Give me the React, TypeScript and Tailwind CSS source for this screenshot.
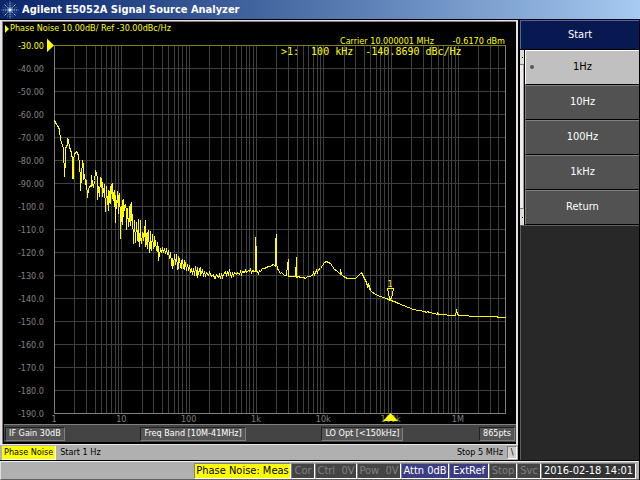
import React from 'react';
import clsx from 'clsx';

// Screen geometry of the graticule
const X0 = 54;
const X1 = 505;
const Y0 = 45;
const DIV = 23;
const DECADE = (X1 - X0) / Math.log10(5e6);

const yLabels = [
  '-30.00', '-40.00', '-50.00', '-60.00', '-70.00', '-80.00', '-90.00', '-100.0', '-110.0',
  '-120.0', '-130.0', '-140.0', '-150.0', '-160.0', '-170.0', '-180.0', '-190.0',
];
const xLabels = ['1', '10', '100', '1k', '10k', '100k', '1M'];

const minorLines: number[] = [];
for (let d = 0; d < 7; d++) {
  for (let m = 1; m < 10; m++) {
    const f = m * 10 ** d;
    if (f > 1 && f < 5e6) minorLines.push(Math.round(X0 + DECADE * Math.log10(f)));
  }
}

const trace = `
54,120 55,122 56,124 57,125 58,127 59,129 60,139 61,142 62,145 63,148 64,176 65,160 65,149 66,145 67,145 67,138
68,140 69,146 70,150 71,152 72,160 72,178 73,178 73,160 74,154 75,152 76,151 77,153 78,155 79,163 80,180 80,190
81,176 82,160 83,165 83,179 84,174 85,183 86,181 87,197 88,188 89,187 90,185 91,186 91,175 92,184 93,187 94,180
95,171 96,173 97,178 97,199 98,186 99,196 100,177 101,178 102,196 102,182 103,192 104,184 105,211 106,186
107,204 108,190 108,210 109,195 110,186 110,203 111,184 112,198 112,183 113,200 114,190 115,222 115,195 116,208
117,191 118,213 118,195 119,205 119,193 120,220 120,238 121,206 122,224 122,200 123,216 123,199 124,210 125,204
126,211 126,229 127,208 128,226 129,218 129,206 130,225 130,204 131,220 131,202 132,226 132,214 133,243 134,220
135,242 136,222 137,240 138,219 138,236 139,246 140,220 140,238 141,243 142,232 143,240 144,226 145,246 145,220
146,244 147,232 147,248 148,230 149,252 150,246 150,231 151,250 152,234 153,248 154,236 154,246 155,240 156,250
157,242 158,260 158,246 159,256 160,248 161,252 162,248 163,251 164,249 165,252 166,249 167,254 168,250 169,258
170,252 171,262 172,268 172,258 173,265 174,254 175,264 176,254 177,269 178,256 178,268 179,258 180,267 181,260
181,268 182,259 183,268 184,260 184,269 185,262 186,270 187,264 188,269 189,266 190,271 191,268 192,274 193,268
194,275 195,266 196,273 197,277 197,267 198,274 199,268 200,275 200,267 201,273 202,270 203,275 204,272 205,275
206,272 208,275 209,272 211,276 213,274 214,278 215,278 216,274 218,277 219,274 220,278 221,273 222,277 223,274
225,271 226,275 227,272 228,275 229,269 230,274 231,276 232,273 233,275 234,272 236,274 237,272 239,274 240,271
241,274 242,271 244,272 245,270 246,272 248,270 249,271 250,269 251,272 252,270 254,271 255,271 255,237 256,254
256,271 257,271 258,273 259,270 260,271 262,268 264,268 266,267 268,266 270,266 271,265 273,264 275,266 275,242
276,234 276,262 277,269 278,269 279,272 280,273 281,272 283,274 284,275 286,275 287,264 288,259 288,276 290,276
295,276 296,257 296,277 298,276 300,277 303,277 305,278 307,276 309,276 312,275 313,272 314,274 316,270 317,272
318,269 320,268 322,265 324,262 326,261 328,262 330,263 332,266 334,269 336,270 338,272 340,274 340,269 341,274
343,276 345,277 347,278 355,278 357,276 359,274 361,272 363,276 364,278 366,282 367,286 368,284 369,289 369,285
370,290 372,292 374,293 377,295 380,296 383,297 386,298 390,300 394,301 398,303 403,305 408,307 413,309 418,310
424,311 426,312 427,311 429,312 434,313 437,314 437,312 438,314 446,314 447,315 455,315 456,310 457,313 458,315
466,315 471,316 495,316 499,317 505,317`;

const softkeys = ['1Hz', '10Hz', '100Hz', '1kHz', 'Return'];

const indicators = [
  { label: 'Phase Noise: Meas', tone: 'meas', width: 'w-[97px]' },
  { label: 'Cor', tone: 'off', width: 'w-6' },
  { label: 'Ctrl  0V', tone: 'off', width: 'w-[42px]' },
  { label: 'Pow  0V', tone: 'off', width: 'w-[44px]' },
  { label: 'Attn 0dB', tone: 'on', width: 'w-12' },
  { label: 'ExtRef', tone: 'on', width: 'w-10' },
  { label: 'Stop', tone: 'off', width: 'w-7' },
  { label: 'Svc', tone: 'off', width: 'w-6' },
  { label: '2016-02-18 14:01', tone: 'clock', width: 'w-[95px]' },
];

const StarLogo = () => (
  <svg viewBox="0 0 18 18" className="h-[18px] w-[18px]" aria-hidden="true">
    <g stroke="#a9c8ec" strokeWidth="1" strokeDasharray="1.6 0.7">
      <path d="M9 5.5V0.5M9 12.5v5M5.5 9H0.5M12.5 9h5" />
      <path d="M6.6 6.6L3 3M11.4 11.4L15 15M11.4 6.6L15 3M6.6 11.4L3 15" />
      <path d="M7.3 4.8L6 1.5M10.7 13.2l1.3 3.3M10.7 4.8L12 1.5M7.3 13.2L6 16.5" strokeOpacity="0.35" />
      <path d="M4.8 7.3L1.5 6M13.2 10.7l3.3 1.3M4.8 10.7L1.5 12M13.2 7.3L16.5 6" strokeOpacity="0.35" />
    </g>
    <circle cx="9" cy="9" r="2.6" fill="none" stroke="#5f86c0" />
    <circle cx="9" cy="9" r="1.8" fill="#fff" />
  </svg>
);

const PlotChart = () => (
  <svg viewBox="3 35 513 389" className="block w-full" role="img" aria-label="Phase noise plot">
    <g shapeRendering="crispEdges" strokeWidth="1" fill="none">
      <g stroke="#404040">
        {minorLines.map((x) => (
          <line key={x} x1={x + 0.5} y1={Y0} x2={x + 0.5} y2={Y0 + DIV * 16} />
        ))}
        {yLabels.slice(1, -1).map((label, i) => (
          <line key={label} x1={X0} y1={Y0 + DIV * (i + 1) + 0.5} x2={X1} y2={Y0 + DIV * (i + 1) + 0.5} />
        ))}
      </g>
      <path d="M54.5 45V413.5H505.5V45" stroke="#808080" />
      <path d="M54 45.5H505" stroke="#808000" />
      <polyline points={trace} stroke="#ffff00" transform="translate(0.5 0.5)" />
      <path
        d="M387 288.5H394M387.5 289V291M393.5 289V291M388.5 291V296M392.5 291V296M389.5 296V299M391.5 296V299M390.5 298V300"
        stroke="#ffff00"
      />
    </g>
    <path d="M47 38.5L54 45.5L47 52Z" fill="#ffff00" />
    <g className="text-[9px]" fill="#808080">
      {yLabels.map((label, i) => (
        <text key={label} x="44" y={Y0 + DIV * i + 4} textAnchor="end" fill={i === 0 ? '#ffff00' : '#808080'}>
          {label}
        </text>
      ))}
      {xLabels.map((label, i) => (
        <text key={label} x={X0 + DECADE * i} y="422" textAnchor="middle">
          {label}
        </text>
      ))}
    </g>
    <path d="M390.5 413L398 421H383Z" fill="#ffff00" />
    <g className="text-[9px]" fill="#ffff00">
      <text x="340" y="44">Carrier 10.000001 MHz</text>
      <text x="505" y="44" textAnchor="end">-0.6170 dBm</text>
      <text x="390" y="287" textAnchor="middle">1</text>
      <text x="281" y="55" className="font-['DejaVu_Sans_Mono',monospace] text-[10px] whitespace-pre">
        {'>1:  100 kHz  -140.8690 dBc/Hz'}
      </text>
    </g>
  </svg>
);

const InfoBox = ({ children }: { children: React.ReactNode }) => (
  <span className="flex h-[14px] items-center border border-t-[#202020] border-l-[#202020] border-r-[#808080] border-b-[#808080] bg-[#555] px-[3px] text-white">
    {children}
  </span>
);

const App: React.FC = () => {
  return (
    <div className="flex min-h-screen flex-col bg-black font-['DejaVu_Sans_Condensed','DejaVu_Sans',sans-serif] text-[11px] leading-none whitespace-pre">
      <header className="flex h-[19px] items-center gap-[3px] bg-linear-to-r from-[#0a246a] to-[#a6caf0] pl-px">
        <StarLogo />
        <h1 className="font-bold text-white">Agilent E5052A Signal Source Analyzer</h1>
      </header>

      <div className="mt-px flex flex-1">
        <main className="mr-[2px] flex flex-1 flex-col bg-[#b0b0b0]">
          <section className="flex-1 border-x-2 border-t border-[#e8e0e8] bg-[#808080] pt-px pl-px">
            <div className="h-full bg-black">
              <div className="flex h-[13px] items-center gap-px pl-[2px] text-[9px] text-[#ffff00]">
                <svg viewBox="0 0 4 8" className="h-2 w-1" aria-hidden="true">
                  <path d="M0 0L4 4L0 8Z" fill="currentColor" />
                </svg>
                Phase Noise 10.00dB/ Ref -30.00dBc/Hz
              </div>
              <PlotChart />
              <div className="mb-[2px] ml-px flex h-[18px] items-center justify-between border-t border-[#808080] bg-[#444] px-px text-[9px]">
                <InfoBox>IF Gain 30dB</InfoBox>
                <InfoBox>Freq Band [10M-41MHz]</InfoBox>
                <InfoBox>LO Opt [&lt;150kHz]</InfoBox>
                <InfoBox>865pts</InfoBox>
              </div>
            </div>
          </section>
          <div className="flex h-4 items-center border-t border-[#e8e8e8] pr-px pl-[2px] text-[9px]">
            <span className="flex h-[14px] items-center border-r border-b border-white bg-[#ffff00] px-[2px]">Phase Noise</span>
            <span className="ml-1 flex-1">Start 1 Hz</span>
            <span>Stop 5 MHz</span>
            <span className="ml-1 flex h-[13px] w-[10px] items-center justify-center border border-t-[#808080] border-l-[#808080] border-r-white border-b-white bg-[#d0d0d0]">\</span>
          </div>
        </main>

        <aside className="mr-px flex w-[119px] flex-col bg-[#282828]">
          <h2 className="flex h-[29px] items-center justify-center border-t border-l border-[#52669c] bg-[#081850] pb-[2px] text-white">
            Start
          </h2>
          <div className="flex bg-black pt-px">
            <div className="flex w-[5px] flex-col gap-px border-r border-black bg-[#808080]">
              <div className="flex h-[14px] items-center justify-center bg-[#e0dcd8]">
                <span className="h-px w-px bg-black" />
              </div>
              <div className="flex-1 border-r border-[#a0a0a0] bg-[#f0ece8]" />
              <div className="flex h-4 items-center justify-center bg-[#e0dcd8]">
                <span className="h-px w-px bg-black" />
              </div>
            </div>
            <nav className="flex flex-1 flex-col">
              {softkeys.map((key, i) => (
                <button
                  key={key}
                  type="button"
                  className={clsx(
                    'relative h-[35px] border-t border-b border-l border-b-black pb-[2px]',
                    i === 0 && 'border-t-white border-l-white bg-[#c0c0c0] text-black',
                    i > 0 && 'border-t-[#808080] border-l-[#808080] bg-[#525252] text-white',
                    key === '1kHz' && 'border-b-[#f0f0d8]',
                  )}
                >
                  {i === 0 && <span className="absolute top-[14px] left-1 h-1 w-1 rounded-full bg-[#585858]" />}
                  {key}
                </button>
              ))}
            </nav>
          </div>
          <div className="flex-1 border-t border-l border-[#606060]" />
        </aside>
      </div>

      <footer className="mt-px mr-px flex h-[19px] items-center justify-end border-t border-b border-l border-t-[#f0f0f0] border-b-[#606060] border-l-[#e0e0e0] bg-[#b0b0b0] pr-[3px]">
        {indicators.map(({ label, tone, width }) => (
          <span
            key={label}
            className={clsx(
              'flex h-4 items-center justify-center border border-t-[#808080] border-r-white border-b-white border-l-[#808080]',
              width,
              tone === 'meas' && 'bg-[#ffff00] text-black',
              tone === 'off' && 'bg-[#444] text-[#808080]',
              tone === 'on' && 'bg-[#3c3c80] text-white',
              tone === 'clock' && 'bg-[#333] text-white',
            )}
          >
            {label}
          </span>
        ))}
      </footer>
    </div>
  );
};

export default App;
